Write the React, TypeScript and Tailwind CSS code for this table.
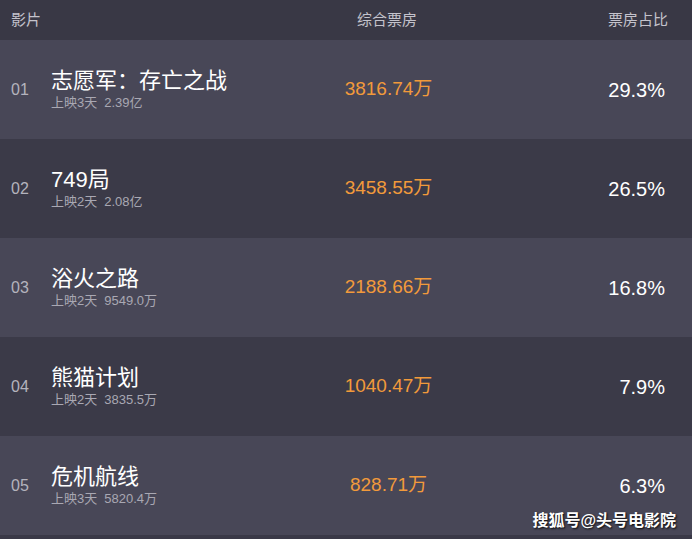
import React from "react";

interface Movie {
  rank: string;
  title: string;
  days: string;
  total: string;
  boxOffice: string;
  share: string;
}

const MOVIES: Movie[] = [
  { rank: "01", title: "志愿军：存亡之战", days: "上映3天", total: "2.39亿", boxOffice: "3816.74万", share: "29.3%" },
  { rank: "02", title: "749局", days: "上映2天", total: "2.08亿", boxOffice: "3458.55万", share: "26.5%" },
  { rank: "03", title: "浴火之路", days: "上映2天", total: "9549.0万", boxOffice: "2188.66万", share: "16.8%" },
  { rank: "04", title: "熊猫计划", days: "上映2天", total: "3835.5万", boxOffice: "1040.47万", share: "7.9%" },
  { rank: "05", title: "危机航线", days: "上映3天", total: "5820.4万", boxOffice: "828.71万", share: "6.3%" },
];

const FONT = "font-['Liberation_Sans','Noto_Sans_CJK_SC',sans-serif]";

const App = () => {
  return (
    <div className={`relative w-[692px] h-[539px] overflow-hidden bg-[#3a3947] ${FONT}`}>
      {/* Header */}
      <div className="flex items-center h-[40px] bg-[#393845] text-[15px] text-[#c4c3cc]">
        <div className="w-[300px] pl-[11px]">影片</div>
        <div className="w-[174px] text-center">综合票房</div>
        <div className="flex-1 text-right pr-[24px]">票房占比</div>
      </div>

      {/* Rows */}
      {MOVIES.map((movie, idx) => (
        <div
          key={movie.rank}
          className={`flex items-center h-[99px] ${idx % 2 === 0 ? "bg-[#484757]" : "bg-[#3b3a48]"}`}
        >
          <div className="w-[300px] flex items-center">
            <span className="w-[51px] pl-[11px] text-[16px] text-[#b4b3bd]">{movie.rank}</span>
            <div className="flex flex-col">
              <span className="text-[22px] leading-[27px] text-white">{movie.title}</span>
              <span className="text-[13px] leading-[18px] text-[#a9a8b3]">
                {movie.days}
                <span className="ml-[7px]">{movie.total}</span>
              </span>
            </div>
          </div>
          <div className="w-[174px] text-center text-[19px] text-[#f29a3b] pl-[3px]">{movie.boxOffice}</div>
          <div className="flex-1 text-right pr-[27px] text-[20px] text-white">{movie.share}</div>
        </div>
      ))}

      {/* Watermark */}
      <div className="absolute right-[16px] bottom-[6px] text-[16px] font-bold text-white [text-shadow:1px_1px_2px_rgba(0,0,0,0.9)]">
        搜狐号@头号电影院
      </div>
    </div>
  );
};

export default App;
